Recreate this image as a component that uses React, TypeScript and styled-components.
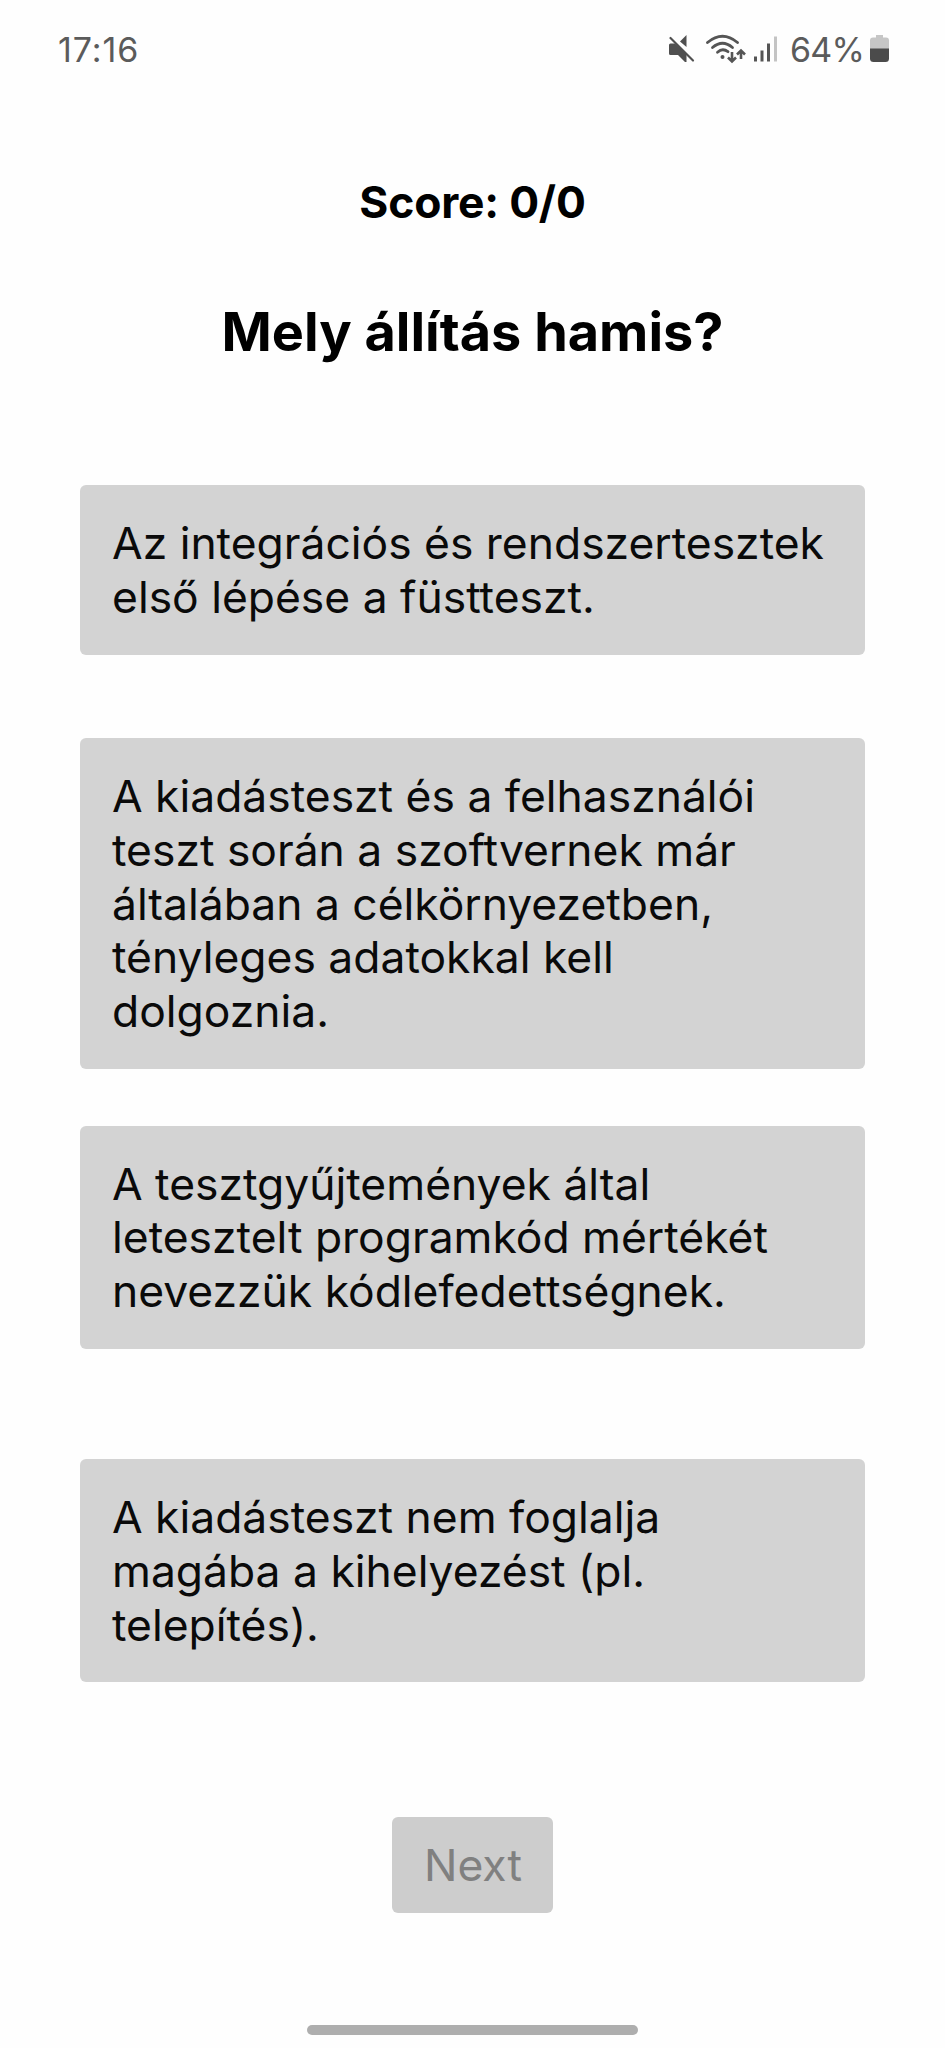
import React from "react";
import styled, { createGlobalStyle } from "styled-components";

const GlobalStyle = createGlobalStyle`
  * { box-sizing: border-box; }
  body { margin: 0; background: #fefefe; }
  button { font: inherit; border: 0; margin: 0; }
`;

const Screen = styled.main`
  display: flex;
  flex-direction: column;
  align-items: center;
  width: 945px;
  height: 2048px;
  overflow: hidden;
  background: #fefefe;
  color: #000;
  font-family: Inter, sans-serif;
`;

const StatusBar = styled.header`
  display: flex;
  justify-content: space-between;
  align-items: center;
  width: 100%;
  height: 98px;
  padding: 0 56px 0 58px;
  color: #5b5b5b;
  font-size: 34px;
  line-height: 40px;
`;

const Clock = styled.time`
  padding-top: 1px;
  letter-spacing: 0.9px;
`;

const Indicators = styled.div`
  display: flex;
  align-items: center;
`;

const BatteryLevel = styled.span`
  margin: 0 6px 0 11px;
  padding-top: 1px;
  letter-spacing: -0.8px;
`;

const Score = styled.p`
  margin: 77px 0 0;
  font-size: 44.4px;
  line-height: 54px;
  font-weight: 700;
  letter-spacing: -0.2px;
`;

const Question = styled.h1`
  margin: 70px 0 0;
  font-size: 54px;
  line-height: 66px;
  font-weight: 700;
`;

const Answers = styled.div`
  display: grid;
  grid-template-rows: repeat(4, 333.6px);
  align-items: center;
  width: 785px;
  margin-top: 38.2px;
`;

const Answer = styled.button`
  width: 100%;
  padding: 32px 32px 30px;
  border-radius: 6px;
  background: #d3d3d3;
  color: #0a0a0a;
  font-size: 44.4px;
  line-height: 53.7px;
  text-align: left;
`;

const NextButton = styled.button`
  width: 161px;
  height: 96px;
  margin-top: 79px;
  padding: 0 0 0 1px;
  border-radius: 6px;
  background: #cdcdcd;
  color: #808080;
  font-size: 44.4px;
  line-height: 54px;
`;

const HomeIndicator = styled.div`
  width: 331px;
  height: 10px;
  margin: auto 0 13px;
  border-radius: 5px;
  background: #aeaeae;
`;

const answers = [
  ["Az integrációs és rendszertesztek", "első lépése a füstteszt."],
  [
    "A kiadásteszt és a felhasználói",
    "teszt során a szoftvernek már",
    "általában a célkörnyezetben,",
    "tényleges adatokkal kell",
    "dolgoznia.",
  ],
  ["A tesztgyűjtemények által", "letesztelt programkód mértékét", "nevezzük kódlefedettségnek."],
  ["A kiadásteszt nem foglalja", "magába a kihelyezést (pl.", "telepítés)."],
];

const StatusIcons = () => (
  <svg width="112" height="32" viewBox="-1 -2 112 32" fill="none">
    <path d="M2.500 8.500h4.500l11.500 10.500v8h-1.500L10 20H2.500Q1 20 1 18.500V10Q1 8.500 2.500 8.500Z" fill="#4f4f4f" />
    <path d="M12 6.500 18.500 0v12Z" fill="#4f4f4f" />
    <path d="M2.500 3 25 25.500" stroke="#4f4f4f" strokeWidth="2.200" strokeLinecap="round" />
    <g stroke="#555" strokeWidth="2.800" strokeLinecap="round">
      <path d="M39.500 7.500Q54.500-5 69.500 7.500" />
      <path d="M44.500 12.500Q54.500 4 64.500 12.500" />
      <path d="M49.500 17.200Q54.500 12.700 60 16.700" />
    </g>
    <circle cx="54.500" cy="22" r="2" fill="#555" />
    <path d="M64 17v9.500M60 22.500l4 4 4-4M73 24v-8.500M69 19.500l4-4 4 4" stroke="#555" strokeWidth="2.600" />
    <path d="M87.500 21.500v5M94 15.500v11M100.500 8.500v18" stroke="#555" strokeWidth="3" />
    <path d="M107.500 1.500v25" stroke="#c4c4c4" strokeWidth="3" />
  </svg>
);

const BatteryIcon = () => (
  <svg width="19" height="28" viewBox="0 0 19 28">
    <path d="M6 0h7v2.500h3q3 0 3 3V14H0V5.500q0-3 3-3h3Z" fill="#c6c6c6" />
    <path d="M0 13.500h19v10q0 3.500-3.500 3.500h-12Q0 27 0 23.500Z" fill="#4b4b4b" />
  </svg>
);

export default function App() {
  return (
    <>
      <GlobalStyle />
      <Screen>
        <StatusBar>
          <Clock>17:16</Clock>
          <Indicators>
            <StatusIcons />
            <BatteryLevel>64%</BatteryLevel>
            <BatteryIcon />
          </Indicators>
        </StatusBar>
        <Score>Score: 0/0</Score>
        <Question>Mely állítás hamis?</Question>
        <Answers>
          {answers.map((lines) => (
            <Answer key={lines[0]}>
              {lines.map((line, i) => (
                <React.Fragment key={line}>
                  {i > 0 && <br />}
                  {line}
                </React.Fragment>
              ))}
            </Answer>
          ))}
        </Answers>
        <NextButton disabled>Next</NextButton>
        <HomeIndicator />
      </Screen>
    </>
  );
}
